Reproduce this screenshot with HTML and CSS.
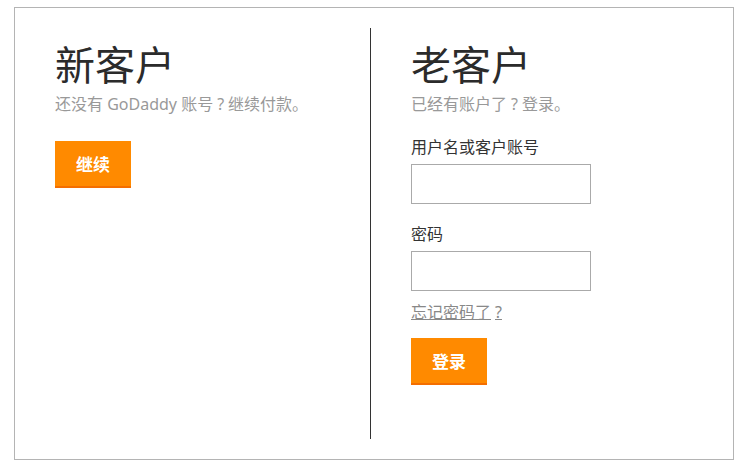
FILE: index.html
```html
<!DOCTYPE html>
<html lang="zh-CN">
<head>
<meta charset="utf-8">
<title>登录</title>
<link rel="stylesheet" href="styles.css">
</head>
<body>
<div class="page">
  <div class="box">
    <section class="col col-new">
      <h1 class="title">新客户</h1>
      <p class="sub">还没有 GoDaddy 账号<span class="q">?</span>继续付款。</p>
      <button class="btn btn-new" type="button">继续</button>
    </section>
    <section class="col col-old">
      <h1 class="title">老客户</h1>
      <p class="sub">已经有账户了<span class="q">?</span>登录。</p>
      <form class="form">
        <label class="label label-user" for="user">用户名或客户账号</label>
        <input class="input" id="user" type="text">
        <label class="label label-pass" for="pass">密码</label>
        <input class="input" id="pass" type="password">
        <a class="forgot" href="#">忘记密码了<span class="q">?</span></a>
        <button class="btn btn-login" type="button">登录</button>
      </form>
    </section>
  </div>
</div>
</body>
</html>
```
FILE: styles.css
```css
html, body {
  margin: 0;
  padding: 0;
  background: #fff;
}
body {
  font-family: "Noto Sans", "Noto Sans CJK SC", sans-serif;
  color: #333;
}
.page {
  padding: 7px 8px 4px 14px;
}
.box {
  display: grid;
  grid-template-columns: 355px 1fr;
  box-sizing: border-box;
  width: 720px;
  height: 453px;
  border: 1px solid #b4b4b4;
  padding: 20px 0;
}
.col {
  padding: 15px 0 0 40px;
}
.col-old {
  border-left: 1px solid #333;
}
.title {
  margin: 0;
  font-size: 40px;
  line-height: 44px;
  font-weight: normal;
  color: #2b2b2b;
}
.sub {
  margin: 6px 0 0;
  font-size: 16px;
  line-height: 22px;
  color: #999;
}
.q {
  padding: 0 4px;
}
.btn {
  display: flex;
  align-items: center;
  justify-content: center;
  width: 76px;
  height: 47px;
  margin: 0;
  padding: 0;
  border: 0;
  border-bottom: 2px solid #f46e00;
  background: #ff8a00;
  color: #fff;
  font-family: "Noto Sans", "Noto Sans CJK SC", sans-serif;
  font-size: 17px;
  font-weight: bold;
  cursor: pointer;
}
.btn-new {
  margin-top: 26px;
}
.form {
  display: flex;
  flex-direction: column;
  align-items: flex-start;
}
.label {
  font-size: 16px;
  line-height: 22px;
  color: #333;
}
.label-user {
  margin-top: 21px;
}
.label-pass {
  margin-top: 19px;
}
.input {
  margin: 6px 0 0;
  width: 180px;
  height: 40px;
  box-sizing: border-box;
  border: 1px solid #aaa;
  padding: 0 8px;
  font-size: 16px;
}
.forgot {
  margin-top: 10px;
  font-size: 16px;
  line-height: 22px;
  color: #888;
  text-decoration: underline;
}
.btn-login {
  margin-top: 15px;
}
```
